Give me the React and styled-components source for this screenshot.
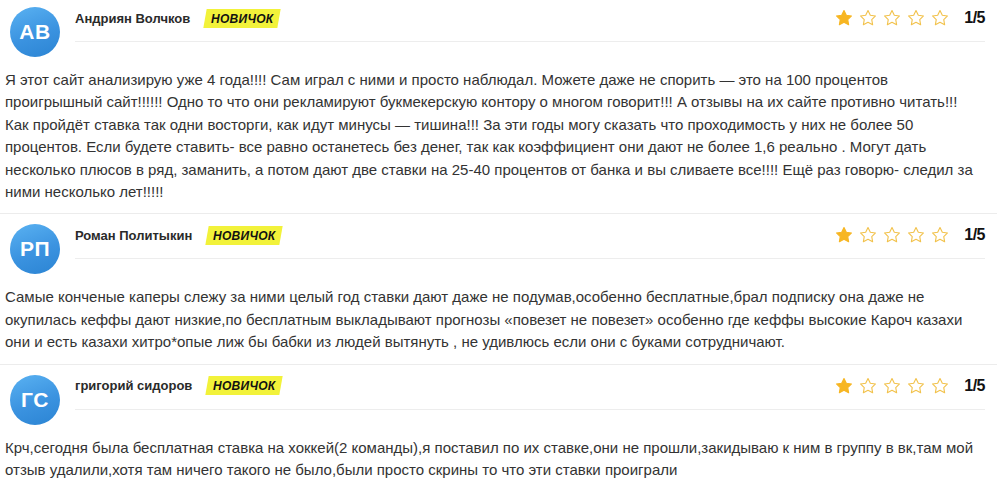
import React from "react";
import styled, { createGlobalStyle } from "styled-components";

const GlobalStyle = createGlobalStyle`
  html, body { margin: 0; padding: 0; background: #fff; }
  body { font-family: "Liberation Sans", Arial, sans-serif; color: #333; }
`;

const List = styled.div`
  width: 997px;
`;

const Review = styled.article`
  padding: 10px 12px 10px 5px;
  border-bottom: 1px solid #ececec;
  &:first-child { padding-top: 7px; }
  &:last-child { border-bottom: none; }
`;

const Header = styled.div`
  display: flex;
  align-items: flex-start;
  margin-left: 5px;
`;

const Avatar = styled.div`
  width: 50px;
  height: 50px;
  border-radius: 50%;
  flex: none;
  background: linear-gradient(160deg, #5ab2f2 0%, #3b93e0 55%, #2b84d3 100%);
  color: #fff;
  font-weight: 700;
  font-size: 21px;
  display: flex;
  align-items: center;
  justify-content: center;
  letter-spacing: 0.5px;
`;

const Main = styled.div`
  flex: 1;
  margin-left: 15px;
`;

const TopRow = styled.div`
  display: flex;
  align-items: center;
  height: 22px;
  padding-bottom: 12px;
  border-bottom: 1px solid #ededed;
`;

const Name = styled.span`
  font-size: 13px;
  font-weight: 700;
  color: #2a2a2a;
`;

const Badge = styled.span`
  margin-left: 15px;
  display: inline-flex;
  align-items: center;
  justify-content: center;
  width: 74px;
  height: 19px;
  background: #f2f23a;
  transform: skewX(-10deg);
  font-size: 12px;
  font-weight: 700;
  font-style: italic;
  color: #111;
  letter-spacing: 0.3px;
`;

const BadgeText = styled.span`
  transform: skewX(10deg);
`;

const Rating = styled.div`
  margin-left: auto;
  display: flex;
  align-items: center;
`;

const Stars = styled.div`
  display: flex;
  gap: 6px;
`;

const Score = styled.span`
  margin-left: 15px;
  font-size: 16px;
  font-weight: 700;
  color: #111;
  letter-spacing: -0.5px;
`;

const Text = styled.p`
  margin: 12px 0 0;
  font-size: 15px;
  line-height: 22.4px;
  color: #333;
`;

const STAR = "12,2 15.09,8.26 22,9.27 17,14.14 18.18,21.02 12,17.77 5.82,21.02 7,14.14 2,9.27 8.91,8.26";

const Star = ({ filled }) => (
  <svg width="18" height="18" viewBox="0 0 24 24">
    <polygon
      points={STAR}
      fill={filled ? "#f7b623" : "none"}
      stroke={filled ? "#f7b623" : "#f2c24c"}
      strokeWidth="1.5"
      strokeLinejoin="round"
    />
  </svg>
);

const reviews = [
  {
    initials: "АВ",
    name: "Андриян Волчков",
    rating: 1,
    text: "Я этот сайт анализирую уже 4 года!!!! Сам играл с ними и просто наблюдал. Можете даже не спорить — это на 100 процентов проигрышный сайт!!!!!! Одно то что они рекламируют букмекерскую контору о многом говорит!!! А отзывы на их сайте противно читать!!! Как пройдёт ставка так одни восторги, как идут минусы — тишина!!! За эти годы могу сказать что проходимость у них не более 50 процентов. Если будете ставить- все равно останетесь без денег, так как коэффициент они дают не более 1,6 реально . Могут дать несколько плюсов в ряд, заманить, а потом дают две ставки на 25-40 процентов от банка и вы сливаете все!!!! Ещё раз говорю- следил за ними несколько лет!!!!!",
  },
  {
    initials: "РП",
    name: "Роман Политыкин",
    rating: 1,
    text: "Самые конченые каперы слежу за ними целый год ставки дают даже не подумав,особенно бесплатные,брал подписку она даже не окупилась кеффы дают низкие,по бесплатным выкладывают прогнозы «повезет не повезет» особенно где кеффы высокие Кароч казахи они и есть казахи хитро*опые лиж бы бабки из людей вытянуть , не удивлюсь если они с буками сотрудничают.",
  },
  {
    initials: "ГС",
    name: "григорий сидоров",
    rating: 1,
    text: "Крч,сегодня была бесплатная ставка на хоккей(2 команды),я поставил по их ставке,они не прошли,закидываю к ним в группу в вк,там мой отзыв удалили,хотя там ничего такого не было,были просто скрины то что эти ставки проиграли",
  },
];

export default function App() {
  return (
    <>
      <GlobalStyle />
      <List>
        {reviews.map((r) => (
          <Review key={r.name}>
            <Header>
              <Avatar>{r.initials}</Avatar>
              <Main>
                <TopRow>
                  <Name>{r.name}</Name>
                  <Badge>
                    <BadgeText>НОВИЧОК</BadgeText>
                  </Badge>
                  <Rating>
                    <Stars>
                      {[1, 2, 3, 4, 5].map((i) => (
                        <Star key={i} filled={i <= r.rating} />
                      ))}
                    </Stars>
                    <Score>{r.rating}/5</Score>
                  </Rating>
                </TopRow>
              </Main>
            </Header>
            <Text>{r.text}</Text>
          </Review>
        ))}
      </List>
    </>
  );
}
